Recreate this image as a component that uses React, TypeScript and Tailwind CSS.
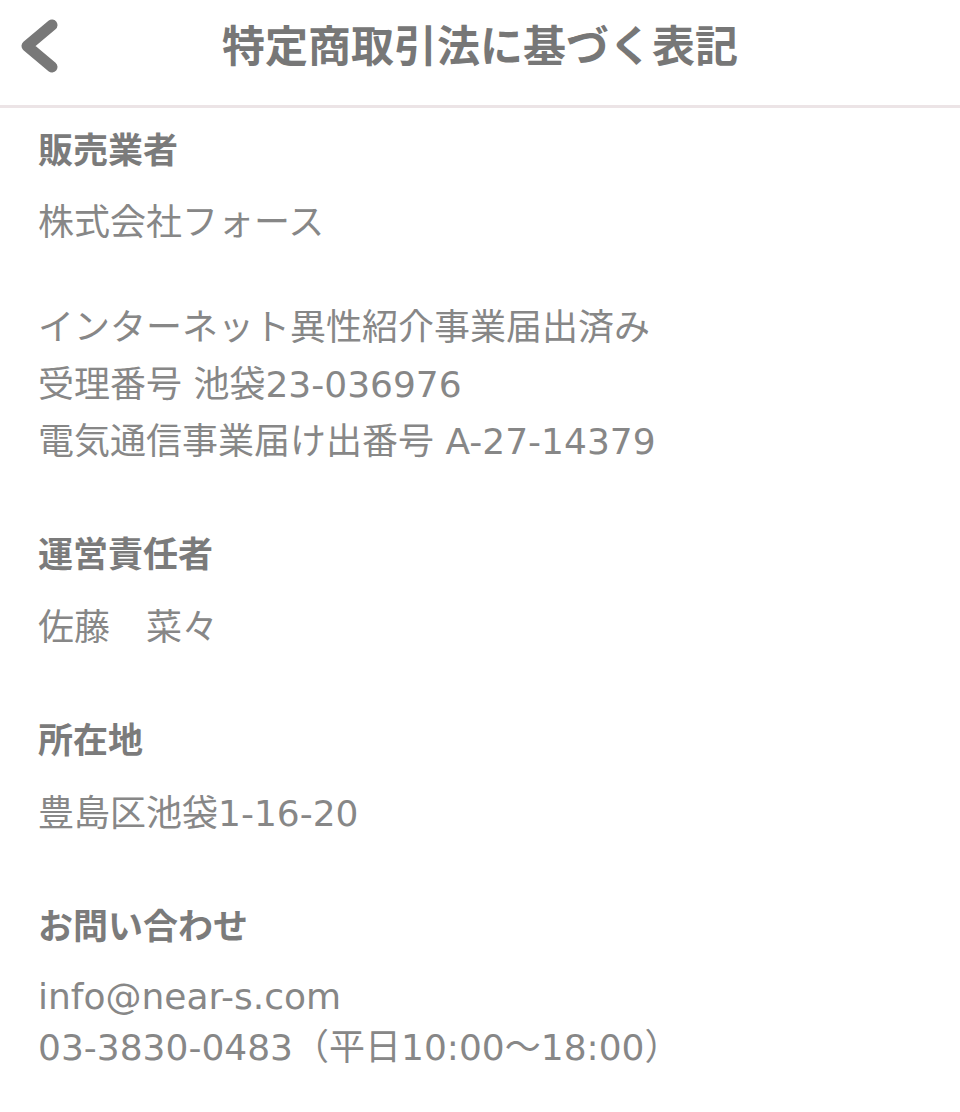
const jp = "font-['DejaVu_Sans','Noto_Sans_CJK_JP',sans-serif]";

function Header() {
  return (
    <header className="relative flex h-[108px] items-center justify-center border-b-[3px] border-[#ece4e6] bg-white">
      <button className="absolute left-[15px] top-[18px] grid h-[56px] w-[48px] place-items-center">
        <svg width="44" height="56" viewBox="0 0 44 56" fill="none">
          <path
            d="M35 7 L10 28 L35 49"
            stroke="#787878"
            strokeWidth="11"
            strokeLinecap="round"
            strokeLinejoin="round"
          />
        </svg>
      </button>
      <h1 className="-mt-[18px] font-['Noto_Sans_CJK_JP',sans-serif] text-[43px] font-bold leading-none text-[#777777]">
        特定商取引法に基づく表記
      </h1>
    </header>
  );
}

function Heading({ children, first }: { children: React.ReactNode; first?: boolean }) {
  return (
    <h2
      className={`${first ? "mt-[20px]" : "mt-[62px]"} font-['Noto_Sans_CJK_JP',sans-serif] text-[35px] font-bold leading-[40px] text-[#7b7b7b]`}
    >
      {children}
    </h2>
  );
}

function Body({ lines, tight, className = "" }: { lines: string[]; tight?: boolean; className?: string }) {
  return (
    <div
      className={`${className} text-[36px] ${tight ? "leading-[51px]" : "leading-[57px]"} text-[#878787]`}
    >
      {lines.map((l) => (
        <p key={l} className="whitespace-pre">
          {l}
        </p>
      ))}
    </div>
  );
}

export default function App() {
  return (
    <div className={`${jp} min-h-[1112px] w-[960px] bg-white`}>
      <Header />
      <main className="px-[38px] pb-10">
        <Heading first>販売業者</Heading>
        <Body className="mt-[26px]" lines={["株式会社フォース"]} />
        <Body
          className="mt-[48px]"
          lines={[
            "インターネット異性紹介事業届出済み",
            "受理番号 池袋23-036976",
            "電気通信事業届け出番号 A-27-14379",
          ]}
        />

        <Heading>運営責任者</Heading>
        <Body className="mt-[27px]" lines={["佐藤　菜々"]} />

        <Heading>所在地</Heading>
        <Body className="mt-[27px]" lines={["豊島区池袋1-16-20"]} />

        <Heading>お問い合わせ</Heading>
        <Body
          tight
          className="mt-[27px]"
          lines={["info@near-s.com", "03-3830-0483（平日10:00〜18:00）"]}
        />
      </main>
    </div>
  );
}
